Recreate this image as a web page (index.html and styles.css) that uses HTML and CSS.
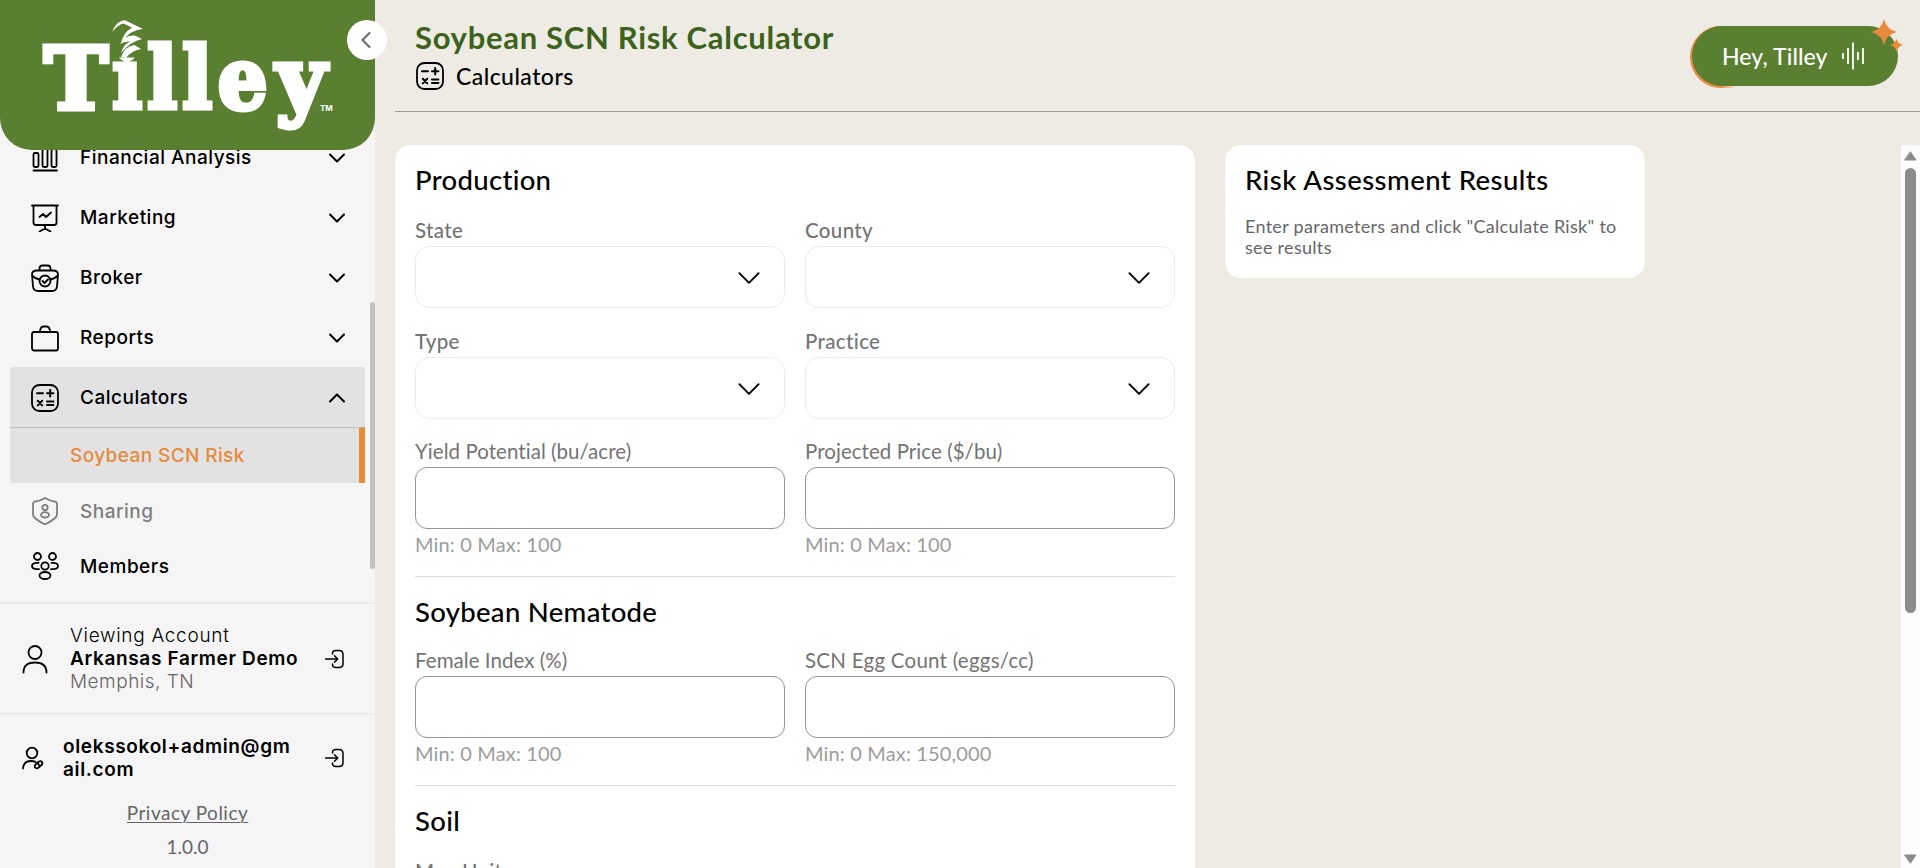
FILE: index.html
```
<!DOCTYPE html>
<html lang="en">
<head>
  <meta charset="UTF-8">
  <meta name="viewport" content="width=device-width, initial-scale=1.0">
  <title>Soybean SCN Risk Calculator</title>
  <link rel="stylesheet" href="styles.css">
</head>
<body>
  <!-- Shared icons -->
  <svg class="sprite" width="0" height="0">
    <symbol id="chevron" viewBox="0 0 16 10"><path d="M1 1.5l7 7 7-7"/></symbol>
    <symbol id="calc" viewBox="0 0 28 28">
      <rect x="1" y="1" width="26" height="26" rx="7.5"/>
      <path d="M6 9.3h6M16 9.3h6.4M19.2 6v6.6M6.8 16.8l4.4 4.6M11.2 16.8l-4.4 4.6M16 17.5h6.4M16 20.9h6.4" stroke-width="2"/>
    </symbol>
    <symbol id="login" viewBox="0 0 20 20">
      <path d="M7.5 5V4.5Q7.5 1.5 11 1.5h3Q18 1.5 18 5.500v9Q18 18.500 14 18.500h-3Q7.500 18.500 7.500 15.500V15M.5 10h12M9.500 6.800l3.200 3.200-3.200 3.200"/>
    </symbol>
  </svg>

  <div class="app">
    <aside class="sidebar">
      <div class="logo">
        <svg width="375" height="150" viewBox="0 0 375 150">
          <g class="wordmark">
            <text x="44" y="109">T</text>
            <text class="narrow" y="109"><tspan x="112.500">i</tspan><tspan x="147.500">l</tspan><tspan x="182.500">l</tspan><tspan x="218">e</tspan></text>
            <text x="276" y="109">y</text>
          </g>
          <rect class="dot-cover" x="111" y="34" width="34" height="23.500"/>
          <path class="husk" d="M112.500 32Q115 22 124.500 20L143 29Q131 29 121 43Q123 33 132 27.500L123.500 23.500Q117 25 112.500 32ZM120 44Q124 35 135 35.500L142 39Q131 41 121 53Q123 45 130 41.500Q124 41 120 44ZM121 57Q125 46 134.500 45L141 49Q131 51 126 58Z"/>
          <text class="tm" x="320" y="111">TM</text>
        </svg>
      </div>
      <button class="collapse"><svg width="10" height="16" viewBox="0 0 10 16"><path d="M8.500 1l-7 7 7 7"/></svg></button>

      <nav class="nav">
        <a class="nav-item">
          <svg class="icon" width="28" height="28" viewBox="0 0 28 28"><path d="M2.500 26.500h23.500"/><rect x="2.500" y="9" width="5" height="14" rx="1.500"/><rect x="11.500" y="3" width="5" height="20" rx="1.500"/><rect x="20.500" y="5" width="5" height="18" rx="1.500"/></svg>
          <span>Financial Analysis</span>
          <svg class="arrow"><use href="#chevron"/></svg>
        </a>
        <a class="nav-item">
          <svg class="icon" width="28" height="28" viewBox="0 0 28 28"><path d="M1 1.500h26M2.500 1.500v17q0 2.500 2.500 2.500h18q2.500 0 2.500-2.500v-17M14 21v4M8.500 27.500l5.500-3 5.500 3M8.500 13l3.500-3 3 3 5-4.500"/></svg>
          <span>Marketing</span>
          <svg class="arrow"><use href="#chevron"/></svg>
        </a>
        <a class="nav-item">
          <svg class="icon" width="28" height="28" viewBox="0 0 28 28"><path d="M8.500 6V4.500q0-3 3-3h5q3 0 3 3V6M6 6.500h16q5 0 5 4l-1 12q-.5 4.500-5 4.500H7q-4.500 0-5-4.500L1 10.500q0-4 5-4zM1.500 11.500q2 3 7 4M26.500 11.500q-2 3-7 4M11.500 17l2 2 3.500-3.500"/><circle cx="14" cy="17" r="5.500"/></svg>
          <span>Broker</span>
          <svg class="arrow"><use href="#chevron"/></svg>
        </a>
        <a class="nav-item">
          <svg class="icon" width="28" height="28" viewBox="0 0 28 28"><rect x="1" y="8" width="26" height="18.500" rx="2"/><path d="M9 8q0-5.500 3.500-5.500h3q3.500 0 3.500 5.500"/></svg>
          <span>Reports</span>
          <svg class="arrow"><use href="#chevron"/></svg>
        </a>
        <a class="nav-item open">
          <svg class="icon" width="28" height="28"><use href="#calc"/></svg>
          <span>Calculators</span>
          <svg class="arrow up"><use href="#chevron"/></svg>
        </a>
        <a class="nav-sub">Soybean SCN Risk</a>
        <a class="nav-item short muted">
          <svg class="icon" width="28" height="28" viewBox="0 0 28 28"><path d="M14 1q5 3 10 3.500 2 .5 2 3V17q0 2.500-2 4-4 3.500-8 5.500-2 1-4 0-4-2-8-5.500-2-1.500-2-4V7.500q0-2.500 2-3Q9 4 14 1z"/><circle cx="14" cy="10.500" r="2.700"/><ellipse cx="14" cy="17.800" rx="4" ry="2.700"/></svg>
          <span>Sharing</span>
        </a>
        <a class="nav-item short">
          <svg class="icon" width="28" height="28" viewBox="0 0 28 28"><ellipse cx="6.500" cy="4.500" rx="3.500" ry="3.500"/><ellipse cx="21.500" cy="4.500" rx="3.500" ry="3.500"/><circle cx="14" cy="14" r="3.700"/><ellipse cx="14" cy="23.500" rx="5.500" ry="3.500"/><path d="M7.500 10.800H5q-4 .5-4 3.200t4 3.200h3M20.500 10.800H23q4 .5 4 3.200t-4 3.200h-3"/></svg>
          <span>Members</span>
        </a>
        <div class="nav-thumb"></div>
      </nav>

      <div class="account">
        <svg class="icon" width="26" height="30" viewBox="0 0 26 30"><circle cx="13" cy="8.500" r="6.500"/><path d="M1.500 28.500q0-10 11.500-10t11.500 10"/></svg>
        <div class="account-text">
          <div class="view">Viewing Account</div>
          <div class="name">Arkansas Farmer Demo</div>
          <div class="place">Memphis, TN</div>
        </div>
        <svg class="login" width="20" height="20"><use href="#login"/></svg>
      </div>
      <div class="user">
        <svg class="icon" width="22" height="24" viewBox="0 0 22 24"><circle cx="10" cy="7" r="5.300"/><path d="M1 22.500q.5-7.500 8-7.500 2.500 0 4.500.8M13.500 18.500l3.500-3q2-1 3 .5t-.5 3L16 22q-1.500.8-2.700-.3t.2-3.200zM16 17.500l1.500 2.500"/></svg>
        <div class="name">olekssokol+admin@gm<br>ail.com</div>
        <svg class="login" width="20" height="20"><use href="#login"/></svg>
      </div>
      <footer class="legal">
        <a>Privacy Policy</a>
        <span>1.0.0</span>
      </footer>
    </aside>

    <main class="main">
      <header class="topbar">
        <div>
          <h1>Soybean SCN Risk Calculator</h1>
          <div class="crumb"><svg class="icon" width="28" height="28"><use href="#calc"/></svg>Calculators</div>
        </div>
        <button class="tilley">
          <span>Hey, Tilley</span>
          <svg width="24" height="28" viewBox="0 0 24 28"><path d="M2 11v6M7 6v16M12 .5v27M17 10v8M22 6v16"/></svg>
          <svg class="sparkle" width="32" height="34" viewBox="0 0 32 34"><path d="M13 0q2.500 10.500 13 13-10.500 2.500-13 13-2.500-10.500-13-13Q10.500 10.500 13 0zM25.500 19.500q1.200 5 6.500 6.500-5.300 1.300-6.500 6.500-1.200-5.200-6.500-6.500 5.300-1.500 6.500-6.500z"/></svg>
        </button>
      </header>

      <div class="content">
        <section class="card form-card">
          <h2>Production</h2>
          <div class="grid">
            <div class="field"><label>State</label><div class="select"><svg><use href="#chevron"/></svg></div></div>
            <div class="field"><label>County</label><div class="select"><svg><use href="#chevron"/></svg></div></div>
            <div class="field"><label>Type</label><div class="select"><svg><use href="#chevron"/></svg></div></div>
            <div class="field"><label>Practice</label><div class="select"><svg><use href="#chevron"/></svg></div></div>
          </div>
          <div class="grid numbers">
            <div class="field"><label>Yield Potential (bu/acre)</label><input type="text"><small>Min: 0 Max: 100</small></div>
            <div class="field"><label>Projected Price ($/bu)</label><input type="text"><small>Min: 0 Max: 100</small></div>
          </div>
          <hr>
          <h2>Soybean Nematode</h2>
          <div class="grid numbers">
            <div class="field"><label>Female Index (%)</label><input type="text"><small>Min: 0 Max: 100</small></div>
            <div class="field"><label class="egg">SCN Egg Count (eggs/cc)</label><input type="text"><small>Min: 0 Max: 150,000</small></div>
          </div>
          <hr>
          <h2>Soil</h2>
          <div class="grid">
            <div class="field"><label>Map Unit</label><div class="select"><svg><use href="#chevron"/></svg></div></div>
          </div>
        </section>

        <section class="card results">
          <h2>Risk Assessment Results</h2>
          <p>Enter parameters and click "Calculate Risk" to see results</p>
        </section>

        <div class="scrollbar">
          <svg width="13" height="10" viewBox="0 0 13 10"><path d="M6.500 1L12 9H1z"/></svg>
          <div class="track"><div class="thumb"></div></div>
          <svg width="13" height="10" viewBox="0 0 13 10"><path d="M1 1h11L6.500 9z"/></svg>
        </div>
      </div>
    </main>
  </div>
</body>
</html>
```
FILE: styles.css
```
* {
  box-sizing: border-box;
}
body {
  margin: 0;
  font-family: Lato, sans-serif;
  background-color: #eeebe5;
  color: #000;
  overflow: hidden;
}
svg {
  display: block;
  flex: none;
  fill: none;
  stroke: currentColor;
  stroke-width: 1.8;
  stroke-linecap: round;
  stroke-linejoin: round;
}
.sprite {
  position: absolute;
}
h1, h2, p {
  margin: 0;
}
button {
  border: none;
  padding: 0;
  font-family: inherit;
}
.app {
  display: flex;
  height: 868px;
}

/* Sidebar */
.sidebar {
  position: relative;
  display: flex;
  flex-direction: column;
  width: 375px;
  flex: none;
  background-color: #f5f5f5;
  font-family: Inter, sans-serif;
  font-size: 19px;
  letter-spacing: 0.5px;
}
.logo {
  position: relative;
  z-index: 1;
  height: 150px;
  flex: none;
  background-color: #5a7f30;
  border-radius: 0 0 32px 32px;
}
.logo svg {
  stroke: none;
  fill: #fff;
  letter-spacing: 0;
}
.wordmark {
  font-family: "DejaVu Serif", serif;
  font-weight: bold;
  font-size: 86px;
  stroke: #fff;
  stroke-width: 5;
  stroke-linejoin: miter;
}
.wordmark .narrow {
  font-family: "DejaVu Serif Condensed", "DejaVu Serif", serif;
  font-stretch: condensed;
}
.dot-cover {
  fill: #5a7f30;
}
.tm {
  font-family: Inter, sans-serif;
  font-weight: 700;
  font-size: 8px;
}
.collapse {
  position: absolute;
  z-index: 2;
  top: 20px;
  right: -12px;
  display: flex;
  align-items: center;
  justify-content: center;
  width: 40px;
  height: 40px;
  padding-right: 2px;
  border-radius: 50%;
  background-color: #fff;
  color: #666;
}
.collapse svg {
  stroke-width: 2;
}
.nav {
  position: relative;
  display: flex;
  flex-direction: column;
  height: 475px;
  flex: none;
  margin-top: -23px;
  padding: 0 10px;
}
.nav-item {
  display: flex;
  align-items: center;
  height: 60px;
  padding: 1px 20px 0 21px;
  font-weight: 500;
}
.nav-item span {
  margin-left: 21px;
}
.arrow {
  width: 16px;
  height: 10px;
  margin-left: auto;
  stroke-width: 2;
}
.up {
  transform: rotate(180deg);
}
.open {
  background-color: #e2e2e2;
}
.nav-sub {
  display: flex;
  align-items: center;
  height: 56px;
  padding-left: 60px;
  border-top: 1px solid #bdbdbd;
  border-right: 6px solid #e68a3c;
  background-color: #e2e2e2;
  color: #e68a3c;
  font-weight: 500;
  letter-spacing: 0.4px;
}
.short {
  height: 55px;
}
.muted {
  color: #7d7d7d;
}
.nav-thumb {
  position: absolute;
  top: 175px;
  right: 0;
  width: 5px;
  height: 267px;
  border-radius: 3px;
  background-color: #c1c1c1;
}
.account,
.user {
  display: flex;
  align-items: center;
  border-top: 2px solid #ebebeb;
  line-height: 23px;
}
.account {
  height: 111px;
  padding: 0 30px 0 22px;
}
.account-text {
  margin-left: 22px;
}
.view,
.place {
  font-weight: 300;
}
.view {
  letter-spacing: 0.7px;
}
.place {
  color: #666;
  letter-spacing: 0.5px;
}
.name {
  font-weight: 600;
  letter-spacing: 0.65px;
}
.login {
  margin-left: auto;
  stroke-width: 1.5;
}
.user {
  height: 88px;
  padding: 0 30px 0 22px;
}
.user .name {
  margin-left: 19px;
}
.legal {
  display: flex;
  flex-direction: column;
  align-items: center;
  margin-top: -5px;
  color: #666;
  font-family: Lato, sans-serif;
  font-size: 19px;
  letter-spacing: 0.5px;
  line-height: 34px;
}
.legal a {
  text-decoration: underline;
  text-underline-offset: 2px;
  text-decoration-thickness: 1px;
}
.legal span {
  letter-spacing: 0;
}

/* Main area */
.main {
  flex: 1;
  min-width: 0;
  padding-left: 20px;
}
.topbar {
  display: flex;
  justify-content: space-between;
  height: 112px;
  padding: 18px 22px 0 20px;
  border-bottom: 1px solid #9d9c98;
}
h1 {
  font-size: 31px;
  line-height: 38px;
  letter-spacing: 0.7px;
  color: #3c621c;
}
.crumb {
  display: flex;
  align-items: center;
  gap: 12px;
  margin: 6px 0 0 1px;
  font-size: 23px;
  font-weight: 500;
  letter-spacing: 0.45px;
}
.tilley {
  position: relative;
  display: flex;
  align-items: center;
  gap: 13px;
  width: 206px;
  height: 60px;
  margin-top: 8px;
  padding-left: 30px;
  border-radius: 30px;
  background-color: #5a7f30;
  color: #fff;
  font-size: 23px;
  font-weight: 500;
  letter-spacing: 0.1px;
}
/* orange rim that fades out towards the right */
.tilley::before {
  content: "";
  position: absolute;
  z-index: -1;
  top: 0;
  left: -2px;
  width: 100px;
  height: 62px;
  border-radius: 31px 0 0 31px;
  background: linear-gradient(90deg, #e68a3c 30%, transparent 46%);
}
.tilley svg {
  stroke-width: 1.8;
  stroke-linecap: butt;
}
.tilley .sparkle {
  position: absolute;
  top: -7px;
  right: -5px;
  fill: #e68a3c;
  stroke: none;
}

/* Cards */
.content {
  display: flex;
  align-items: flex-start;
  height: 723px;
  margin-top: 33px;
  overflow: hidden;
}
.card {
  background-color: #fff;
  border-radius: 16px;
  padding: 18px 20px 20px;
}
.form-card {
  width: 800px;
}
h2 {
  font-size: 27.5px;
  font-weight: 500;
  line-height: 34px;
  letter-spacing: 0.3px;
}
.results h2 {
  letter-spacing: 0.45px;
}
.grid {
  display: grid;
  grid-template-columns: 1fr 1fr;
  gap: 20px;
  margin-top: 20px;
}
.numbers {
  margin-top: 19px;
}
h2 + .numbers {
  margin-top: 18px;
}
.field {
  display: flex;
  flex-direction: column;
}
label {
  height: 29px;
  color: #747474;
  font-size: 20.5px;
  line-height: 26px;
  font-weight: 500;
  letter-spacing: 0.35px;
}
.numbers label {
  font-weight: 400;
  letter-spacing: 0.05px;
}
.numbers .egg {
  letter-spacing: 0.25px;
}
.select,
input {
  height: 62px;
  border: 1px solid #ebebeb;
  border-radius: 14px;
  background-color: #fff;
}
input {
  border-color: #949494;
  border-radius: 12px;
}
.select {
  display: flex;
  align-items: center;
  justify-content: flex-end;
  padding: 2px 24px 0 0;
}
.select svg {
  width: 22px;
  height: 14px;
  stroke-width: 1.4;
}
small {
  height: 30px;
  color: #9c9c9c;
  font-size: 20px;
  line-height: 30px;
  letter-spacing: 0.15px;
}
hr {
  height: 1px;
  margin: 17px 0 18px;
  border: none;
  background-color: #dedede;
}
.results {
  width: 420px;
  height: 133px;
  margin-left: 30px;
}
.results p {
  margin-top: 19px;
  color: #666;
  font-size: 18px;
  line-height: 21px;
  letter-spacing: 0.3px;
}

/* Page scrollbar */
.scrollbar {
  display: flex;
  flex-direction: column;
  align-items: center;
  align-self: stretch;
  width: 19px;
  margin-left: auto;
  padding: 6px 0 4px;
  background-color: #fcfcfc;
}
.scrollbar svg {
  fill: #8b8b8b;
  stroke: #8b8b8b;
  stroke-width: 1;
}
.track {
  flex: 1;
  padding-top: 7px;
}
.thumb {
  width: 11px;
  height: 445px;
  border-radius: 6px;
  background-color: #8b8b8b;
}
```
